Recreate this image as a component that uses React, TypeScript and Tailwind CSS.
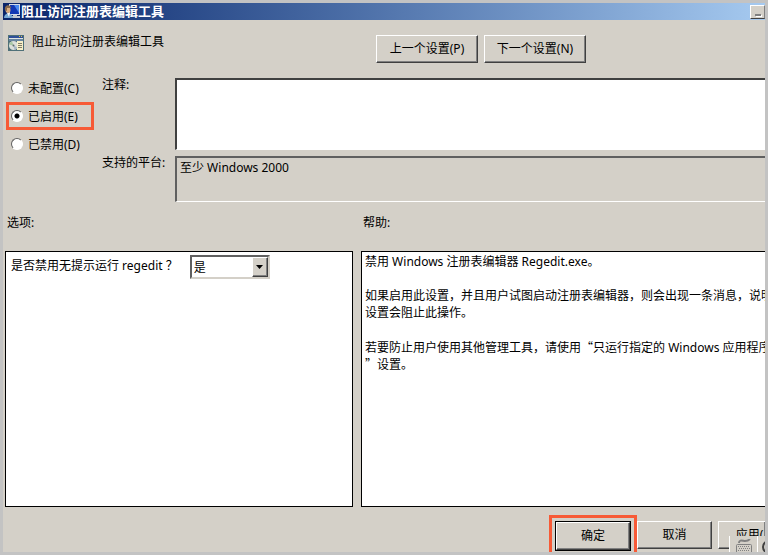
import { useState } from 'react';
import type { ButtonHTMLAttributes, ReactNode } from 'react';

type PolicyState = 'none' | 'enabled' | 'disabled';

const STATES: { value: PolicyState; label: string }[] = [
  { value: 'none', label: '未配置(C)' },
  { value: 'enabled', label: '已启用(E)' },
  { value: 'disabled', label: '已禁用(D)' },
];

// quotation marks take a full-width cell only in the CJK face
function Quote({ children }: { children: ReactNode }) {
  return <span className="font-['Noto_Sans_CJK_SC',sans-serif]">{children}</span>;
}

const HELP_LINES: ReactNode[] = [
  '禁用 Windows 注册表编辑器 Regedit.exe。',
  '',
  '如果启用此设置，并且用户试图启动注册表编辑器，则会出现一条消息，说明',
  '设置会阻止此操作。',
  '',
  <>若要防止用户使用其他管理工具，请使用<Quote>“</Quote>只运行指定的 Windows 应用程序</>,
  <><Quote>”</Quote>设置。</>,
];

function UserIcon() {
  return (
    <svg width="17" height="16" viewBox="0 0 17 16" className="shrink-0">
      <rect x="5" y="0" width="11" height="11" fill="#d5dce8" />
      <rect x="6" y="1" width="9" height="9" fill="#1238b4" />
      <path d="M10 1h5v8z" fill="#4a8af0" />
      <path d="M9 11h4v1h3v2H8v-2h1z" fill="#c4c8d0" />
      <ellipse cx="4" cy="6" rx="2.500" ry="3" fill="#dcae82" />
      <path d="M1 6c-1-6 6-6 6-2L3 4v3z" fill="#8a6a4c" />
      <path d="M0 14c0-6 8-6 9 0z" fill="#79abd6" />
      <path d="M3 9h3l-1 4z" fill="#f2f6fa" />
    </svg>
  );
}

function PolicyIcon() {
  return (
    <svg width="16" height="16" viewBox="0 0 16 16" className="shrink-0">
      <rect width="16" height="16" fill="#4f7078" />
      <rect x="1" y="1" width="14" height="2" fill="#2f4f98" />
      <path d="M11 1h1v1h-1zM13 1h1v1h-1z" fill="#e6c64b" />
      <rect x="1" y="3" width="14" height="1" fill="#dfe4e4" />
      <rect x="1" y="4" width="14" height="2" fill="#6885a0" />
      <circle cx="5.500" cy="10.500" r="4.500" fill="#dcdfda" />
      <path d="M5.500 10.500L1 9.500a5 5 0 0 1 3-3z" fill="#a8c8a4" />
      <path d="M5.500 10.500l4 2a5 5 0 0 1-3 2.500z" fill="#a9b8c8" />
      <circle cx="5.500" cy="10.500" r="1" fill="#5c6a6e" />
      <rect x="9" y="6" width="6" height="9" fill="#f6efc8" />
      <path d="M10 8.500h4M10 10.500h4M10 12.500h4" stroke="#827c68" />
    </svg>
  );
}

function KeyboardIcon() {
  return (
    <svg width="16" height="13" viewBox="0 0 16 13" fill="none" stroke="#808080">
      <path d="M3 4c0-4 4-2 6-2s3 0 5-2" strokeWidth="2" />
      <rect x="0.500" y="5.500" width="15" height="9" rx="1" strokeWidth="1" />
      <path d="M2 7.500h12M3 9.500h11M2 11.500h12" strokeDasharray="1 1" />
    </svg>
  );
}

function PushButton({ className = '', ...props }: ButtonHTMLAttributes<HTMLButtonElement>) {
  return (
    <button
      type="button"
      className={`h-7 shrink-0 border border-t-white border-l-white border-r-[#404040] border-b-[#404040] bg-[#d4d0c8] pb-px text-center shadow-[inset_-1px_-1px_0_#808080] ${className}`}
      {...props}
    />
  );
}

export default function App() {
  const [state, setState] = useState<PolicyState>('enabled');
  const [comment, setComment] = useState('');
  const [silent, setSilent] = useState('是');

  return (
    <div
      lang="zh-CN"
      className="h-screen bg-[#c3c3c3] p-[3px] font-['Noto_Sans','Noto_Sans_CJK_SC',sans-serif] text-[12px] leading-[17px] text-black"
    >
      <div className="relative flex h-full flex-col overflow-hidden bg-[#d4d0c8]">
        <header className="flex h-[17px] shrink-0 items-center bg-linear-to-r from-[#0a246a] to-[#a6caf0] pl-px">
          <UserIcon />
          <h1 className="text-[13px] font-bold whitespace-nowrap text-white">阻止访问注册表编辑工具</h1>
          <button
            type="button"
            aria-label="最小化"
            className="ml-auto flex h-[14px] w-[15px] items-end justify-center border border-t-white border-l-white border-r-[#808080] border-b-[#404040] bg-[#d4d0c8] pb-[2px]"
          >
            <span className="h-[2px] w-[6px] bg-[#808080] shadow-[1px_1px_0_#fff]" />
          </button>
        </header>

        <div className="flex shrink-0 items-start pt-[15px] pl-[5px]">
          <div className="flex w-[368px] gap-2">
            <PolicyIcon />
            <span className="-mt-0.5">阻止访问注册表编辑工具</span>
          </div>
          <div className="flex gap-[6px]">
            <PushButton className="w-[102px]">上一个设置(P)</PushButton>
            <PushButton className="w-[102px]">下一个设置(N)</PushButton>
          </div>
        </div>

        <div className="flex shrink-0 pt-[11px]">
          <fieldset className="w-[99px] shrink-0 pl-[3px]">
            {STATES.map(s => (
              <label
                key={s.value}
                className={`flex h-7 w-[88px] items-center gap-[5px] border-[3px] pl-[2px] ${
                  s.value === 'enabled' ? 'border-[#f75a36]' : 'border-transparent'
                }`}
              >
                <input
                  type="radio"
                  name="state"
                  checked={state === s.value}
                  onChange={() => setState(s.value)}
                  className="size-3 appearance-none rounded-full border border-t-[#606060] border-l-[#606060] border-r-white border-b-white bg-white checked:bg-[radial-gradient(circle,#000_2px,#fff_3px)]"
                />
                {s.label}
              </label>
            ))}
          </fieldset>
          <div className="grid flex-1 grid-cols-[73px_1fr] gap-y-[6px] pt-1">
            <label htmlFor="comment" className="-mt-0.5">注释:</label>
            <textarea
              id="comment"
              value={comment}
              onChange={e => setComment(e.target.value)}
              className="h-[72px] w-full resize-none border-t-2 border-l-2 border-b border-t-[#404040] border-l-[#404040] border-b-white bg-white px-1 outline-none"
            />
            <label htmlFor="platform" className="-mt-0.5">支持的平台:</label>
            <textarea
              id="platform"
              readOnly
              value="至少 Windows 2000"
              className="h-[46px] w-full resize-none border-t-2 border-l-2 border-b border-t-[#606060] border-l-[#606060] border-b-white px-[3px] pt-px outline-none"
            />
          </div>
        </div>

        <div className="grid min-h-0 flex-1 grid-cols-[348px_1fr] grid-rows-[auto_1fr] gap-x-2 pt-3 pl-[2px]">
          <h2 className="h-[37px] pl-[2px]">选项:</h2>
          <h2 className="h-[37px] pl-[2px]">帮助:</h2>
          <section className="border border-black bg-white pt-[3px] pl-[5px]">
            <div className="flex items-start gap-3">
              <label htmlFor="silent" className="pt-[2px]">是否禁用无提示运行 regedit ？</label>
              <div className="relative">
                <select
                  id="silent"
                  value={silent}
                  onChange={e => setSilent(e.target.value)}
                  className="h-6 w-20 appearance-none border-2 border-t-[#606060] border-l-[#606060] border-r-[#d4d0c8] border-b-[#d4d0c8] bg-white pl-[2px] outline-none"
                >
                  <option>是</option>
                  <option>否</option>
                </select>
                <span className="pointer-events-none absolute top-[2px] right-[2px] flex h-5 w-4 items-center justify-center border border-t-white border-l-white border-r-[#404040] border-b-[#404040] bg-[#d4d0c8] shadow-[inset_-1px_-1px_0_#808080]">
                  <svg width="7" height="4" viewBox="0 0 7 4">
                    <path d="M0 0h7L3.500 4z" />
                  </svg>
                </span>
              </div>
            </div>
          </section>
          <section className="overflow-hidden border border-r-0 border-black bg-white pt-px pl-[3px] whitespace-nowrap">
            {HELP_LINES.map((line, i) => (
              <p key={i} className="h-[17px]">{line}</p>
            ))}
          </section>
        </div>

        <footer className="flex h-[45px] shrink-0 justify-end overflow-hidden pt-2">
          <div className="h-10 shrink-0 border-[3px] border-[#f75a36] p-1">
            <PushButton className="w-[74px] outline outline-black">确定</PushButton>
          </div>
          <div className="flex gap-[6px] pt-[6px]">
            <PushButton className="w-[75px]">取消</PushButton>
            <PushButton className="w-[47px] border-r-0 pl-[15px] whitespace-nowrap">应用(</PushButton>
          </div>
        </footer>

        {/* language bar */}
        <div className="absolute right-0 bottom-0 flex h-4 w-9 overflow-hidden border-l border-white bg-[#d4d0c8]">
          <div className="flex w-7 shrink-0 items-end justify-center border-r border-white">
            <KeyboardIcon />
          </div>
          <svg width="8" height="16" viewBox="0 0 8 16" fill="none" stroke="#404040" strokeWidth="2" className="shrink-0">
            <circle cx="11" cy="11" r="6" />
          </svg>
        </div>
      </div>
    </div>
  );
}
